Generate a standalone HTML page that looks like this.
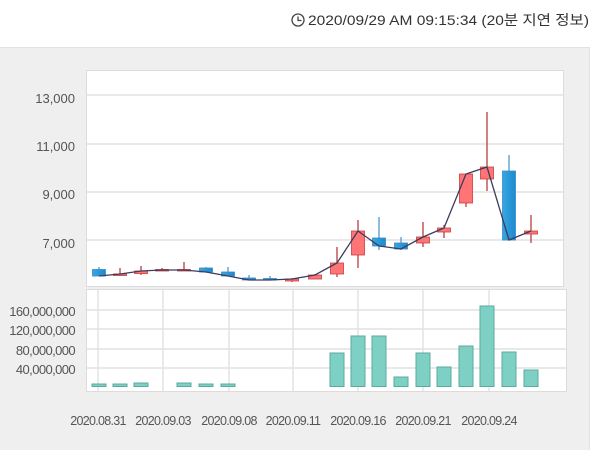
<!DOCTYPE html>
<html><head><meta charset="utf-8"><style>
html,body{margin:0;padding:0;width:600px;height:450px;overflow:hidden;background:#fff;font-family:"Liberation Sans","Noto Sans CJK KR",sans-serif}
</style></head><body>
<svg width="600" height="450" xmlns="http://www.w3.org/2000/svg" style="position:absolute;left:0;top:0">
<defs>
<linearGradient id="bl" x1="0" x2="1"><stop offset="0" stop-color="#3aa6e0"/><stop offset="1" stop-color="#1a8ad0"/></linearGradient>
</defs>
<rect x="0" y="47" width="589" height="403" fill="#efefef"/>
<line x1="589.5" y1="47" x2="589.5" y2="450" stroke="#e2e2e2"/>
<line x1="0" y1="47.5" x2="589" y2="47.5" stroke="#e2e2e2"/>
<circle cx="298" cy="20" r="6" fill="none" stroke="#444" stroke-width="1.3"/>
<path d="M298 16.5V20.5H301.5" fill="none" stroke="#444" stroke-width="1.3"/>
<text x="308" y="25" font-size="14" fill="#333" textLength="281" lengthAdjust="spacingAndGlyphs">2020/09/29 AM 09:15:34 (20분 지연 정보)</text>
<!-- upper chart -->
<rect x="86.5" y="70.5" width="477" height="216" fill="#fff" stroke="#dcdcdc"/>
<g stroke="#e2e2e2" stroke-width="1.5">
<line x1="87" y1="95" x2="563" y2="95"/><line x1="87" y1="144" x2="563" y2="144"/>
<line x1="87" y1="192" x2="563" y2="192"/><line x1="87" y1="240" x2="563" y2="240"/>
</g>
<g font-size="13" fill="#555" text-anchor="end">
<text x="75" y="103">13,000</text><text x="75" y="151">11,000</text><text x="75" y="199">9,000</text><text x="75" y="248">7,000</text>
</g>
<!-- wicks -->
<g stroke-width="1.2">
<line x1="99" y1="267" x2="99" y2="276" stroke="#4a90c8"/>
<line x1="120" y1="268" x2="120" y2="276" stroke="#b03030"/>
<line x1="141" y1="266" x2="141" y2="275" stroke="#b03030"/>
<line x1="162" y1="268" x2="162" y2="271" stroke="#b03030"/>
<line x1="184" y1="262" x2="184" y2="271" stroke="#b03030"/>
<line x1="206" y1="267" x2="206" y2="272" stroke="#4a90c8"/>
<line x1="228" y1="267" x2="228" y2="276" stroke="#4a90c8"/>
<line x1="249" y1="275" x2="249" y2="280" stroke="#4a90c8"/>
<line x1="270" y1="276" x2="270" y2="280" stroke="#4a90c8"/>
<line x1="292" y1="278" x2="292" y2="282" stroke="#b03030"/>
<line x1="315" y1="274" x2="315" y2="279" stroke="#b03030"/>
<line x1="337" y1="247" x2="337" y2="277" stroke="#b03030"/>
<line x1="358" y1="220" x2="358" y2="268" stroke="#b03030"/>
<line x1="379" y1="217" x2="379" y2="250" stroke="#4a90c8"/>
<line x1="401" y1="237" x2="401" y2="250" stroke="#4a90c8"/>
<line x1="423" y1="222" x2="423" y2="247" stroke="#b03030"/>
<line x1="444" y1="225" x2="444" y2="238" stroke="#b03030"/>
<line x1="466" y1="174" x2="466" y2="207" stroke="#b03030"/>
<line x1="487" y1="112" x2="487" y2="191" stroke="#b03030"/>
<line x1="509" y1="155" x2="509" y2="240" stroke="#4a90c8"/>
<line x1="531" y1="215" x2="531" y2="243" stroke="#b03030"/>
</g>
<g fill="url(#bl)" stroke="#3a8ac8" stroke-width="0.8">
<rect x="92.5" y="269.5" width="13" height="6.5"/>
<rect x="199.5" y="268" width="13" height="4"/>
<rect x="221.5" y="272" width="13" height="4"/>
<rect x="242.5" y="278" width="13" height="2"/>
<rect x="263.5" y="278.5" width="13" height="1.5"/>
<rect x="372.5" y="238" width="13" height="8"/>
<rect x="394.5" y="243" width="13" height="6"/>
<rect x="502.5" y="171" width="13" height="69"/>
</g>
<g fill="#ff7474" stroke="#c83c3c" stroke-width="0.8">
<rect x="113.5" y="274" width="13" height="1.5"/>
<rect x="134.5" y="271" width="13" height="2.5"/>
<rect x="155.5" y="269.5" width="13" height="1.5"/>
<rect x="177.5" y="269.5" width="13" height="1.5"/>
<rect x="285.5" y="279" width="13" height="2"/>
<rect x="308.5" y="275" width="13" height="4"/>
<rect x="330.5" y="263" width="13" height="11"/>
<rect x="351.5" y="231" width="13" height="24"/>
<rect x="416.5" y="237" width="13" height="6"/>
<rect x="437.5" y="228" width="13" height="4"/>
<rect x="459.5" y="174" width="13" height="29"/>
<rect x="480.5" y="167" width="13" height="12"/>
<rect x="524.5" y="231" width="13" height="3"/>
</g>
<polyline fill="none" stroke="#3c3c5c" stroke-width="1.3" points="99,276 120,274 141,271 162,270 184,270 206,272 228,276 249,280 270,280 292,279 315,275 337,263 358,231 379,246 401,249 423,237 444,228 466,174 487,167 509,240 531,231"/>
<!-- lower chart -->
<rect x="86.5" y="289.5" width="480" height="102" fill="#fff" stroke="#dcdcdc"/>
<g stroke="#e2e2e2" stroke-width="1.5">
<line x1="87" y1="310" x2="566" y2="310"/><line x1="87" y1="329" x2="566" y2="329"/>
<line x1="87" y1="349" x2="566" y2="349"/><line x1="87" y1="368" x2="566" y2="368"/>
<line x1="98" y1="290" x2="98" y2="391"/><line x1="163" y1="290" x2="163" y2="391"/>
<line x1="229" y1="290" x2="229" y2="391"/><line x1="293" y1="290" x2="293" y2="391"/>
<line x1="358" y1="290" x2="358" y2="391"/><line x1="423" y1="290" x2="423" y2="391"/>
<line x1="489" y1="290" x2="489" y2="391"/>
</g>
<g font-size="13" fill="#555" text-anchor="end" letter-spacing="-0.6">
<text x="75" y="316">160,000,000</text><text x="75" y="335">120,000,000</text>
<text x="75" y="355">80,000,000</text><text x="75" y="374">40,000,000</text>
</g>
<g fill="#7fd0c4" stroke="#5aab9f" stroke-width="1">
<rect x="92" y="384" width="14" height="2.5"/>
<rect x="113" y="384" width="14" height="2.5"/>
<rect x="134" y="383" width="14" height="3.5"/>
<rect x="177" y="383" width="14" height="3.5"/>
<rect x="199" y="384" width="14" height="2.5"/>
<rect x="221" y="384" width="14" height="2.5"/>
<rect x="330" y="353" width="14" height="33.5"/>
<rect x="351" y="336" width="14" height="50.5"/>
<rect x="372" y="336" width="14" height="50.5"/>
<rect x="394" y="377" width="14" height="9.5"/>
<rect x="416" y="353" width="14" height="33.5"/>
<rect x="437" y="367" width="14" height="19.5"/>
<rect x="459" y="346" width="14" height="40.5"/>
<rect x="480" y="306" width="14" height="80.5"/>
<rect x="502" y="352" width="14" height="34.5"/>
<rect x="524" y="370" width="14" height="16.5"/>
</g>
<g font-size="12.5" fill="#555" text-anchor="middle" letter-spacing="-0.7">
<text x="98" y="425">2020.08.31</text><text x="163" y="425">2020.09.03</text>
<text x="229" y="425">2020.09.08</text><text x="293" y="425">2020.09.11</text>
<text x="358" y="425">2020.09.16</text><text x="423" y="425">2020.09.21</text>
<text x="489" y="425">2020.09.24</text>
</g>
</svg>
</body></html>
